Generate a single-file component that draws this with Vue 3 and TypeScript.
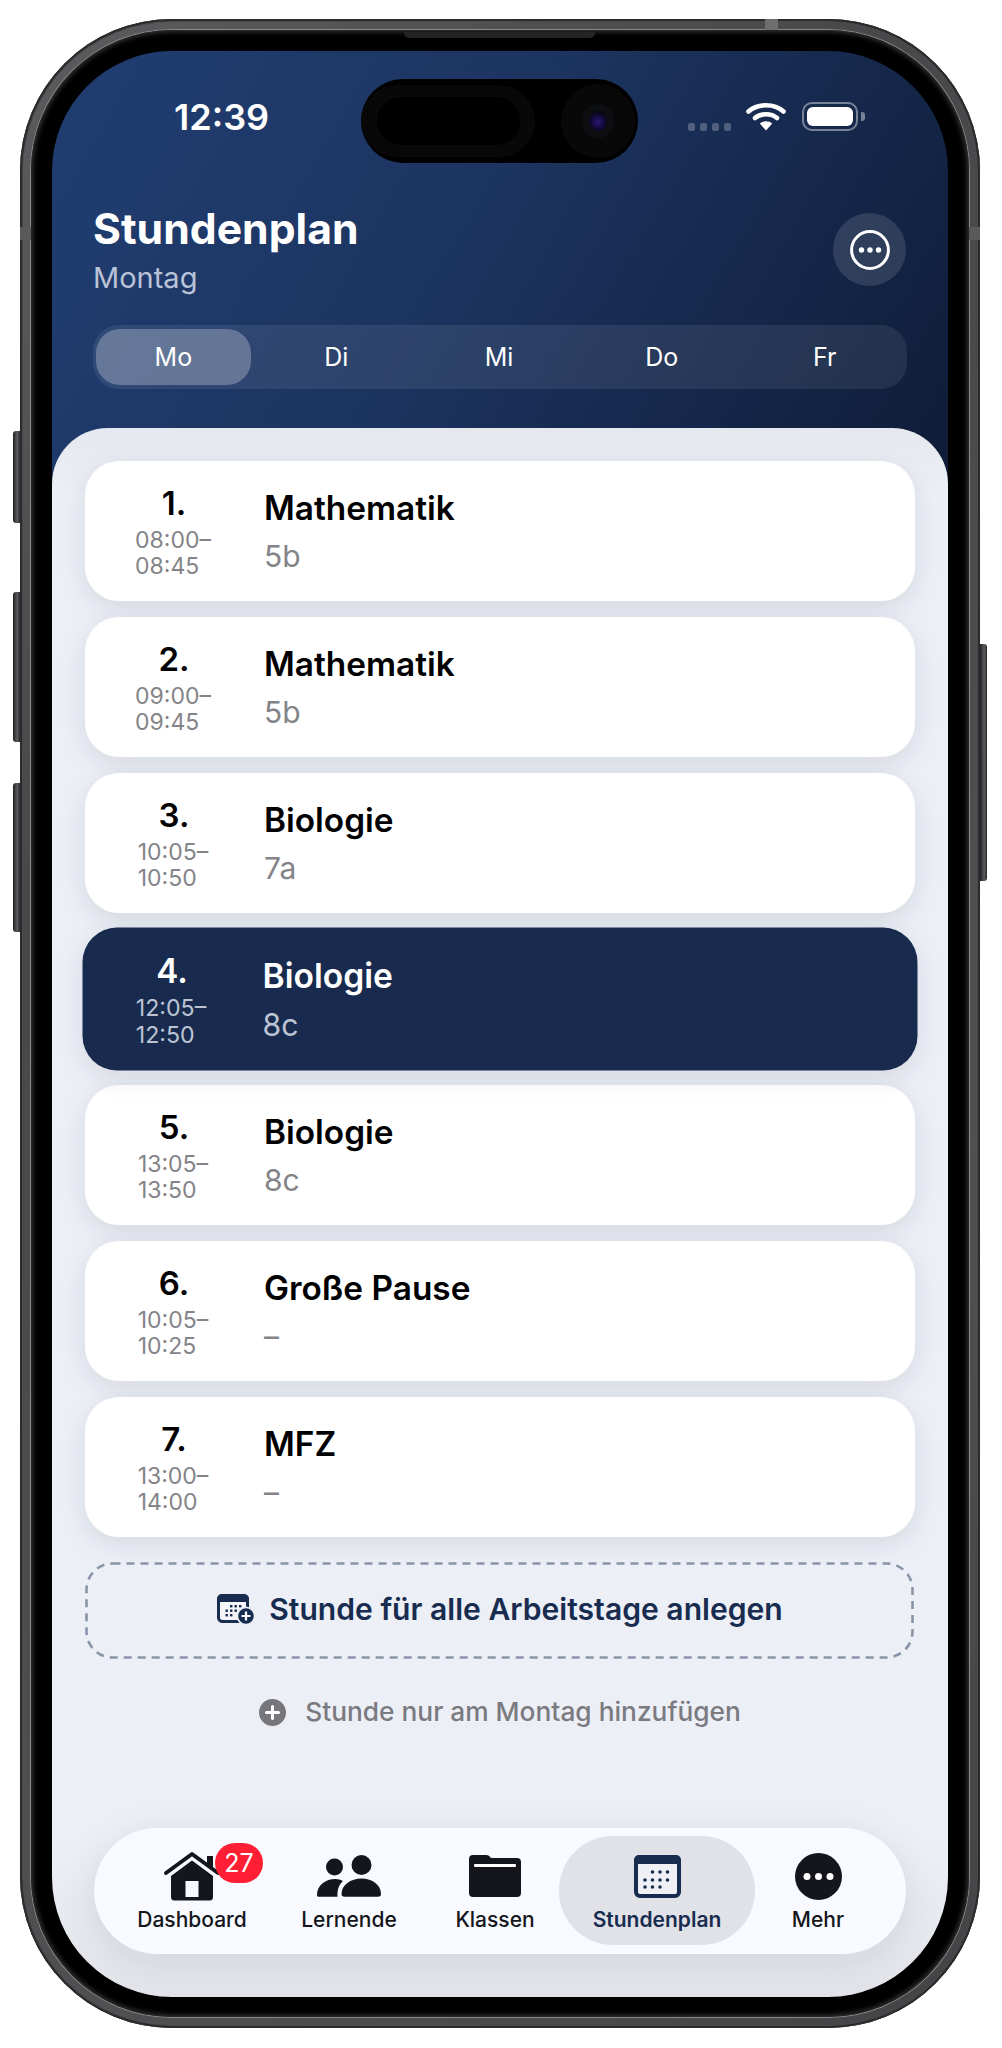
<template>
  <div class="page">
    <div class="device">
      <span class="side-btn left b1"></span>
      <span class="side-btn left b2"></span>
      <span class="side-btn left b3"></span>
      <span class="side-btn right b4"></span>
      <span class="speaker"></span>
      <span class="band band-top"></span>
      <span class="band band-left"></span>
      <span class="band band-right"></span>
      <div class="bezel">
        <div class="screen">
          <div class="island">
            <div class="island-ring"><div class="island-core"></div></div>
            <div class="camera"><div class="lens"></div></div>
          </div>

          <div class="status">
            <span class="time">12:39</span>
            <div class="status-right">
              <div class="signal"><i></i><i></i><i></i><i></i></div>
              <svg class="wifi" width="40" height="29" viewBox="0 0 40 29">
                <path d="M2.5 9.5C11.5 1.2 28.5 1.2 37.5 9.5" fill="none" stroke="#fff" stroke-width="4.6" stroke-linecap="round" />
                <path d="M9 16C14.8 11 25.2 11 31 16" fill="none" stroke="#fff" stroke-width="4.6" stroke-linecap="round" />
                <path d="M13.8 21.6C17 18.6 23 18.6 26.2 21.6L20 28.6Z" fill="#fff" />
              </svg>
              <div class="battery"><div class="battery-fill"></div></div>
              <span class="battery-nub"></span>
            </div>
          </div>

          <header class="header">
            <div class="title-row">
              <div>
                <h1>Stundenplan</h1>
                <p>Montag</p>
              </div>
              <button class="menu-btn" type="button">
                <svg width="40" height="40" viewBox="0 0 40 40">
                  <circle cx="20" cy="20" r="18.4" fill="none" stroke="#fff" stroke-width="3" />
                  <circle cx="11.5" cy="20" r="2.7" fill="#fff" />
                  <circle cx="20" cy="20" r="2.7" fill="#fff" />
                  <circle cx="28.5" cy="20" r="2.7" fill="#fff" />
                </svg>
              </button>
            </div>
            <div class="days">
              <span v-for="d in days" :key="d" class="day" :class="{ active: d === activeDay }">{{ d }}</span>
            </div>
          </header>

          <main class="sheet">
            <div class="lessons">
              <article
                v-for="l in lessons"
                :key="l.nr"
                class="lesson"
                :class="{ current: l.current }"
              >
                <div class="slot">
                  <div class="nr">{{ l.nr }}.</div>
                  <div class="hours">
                    <div>{{ l.from }}–</div>
                    <div>{{ l.to }}</div>
                  </div>
                </div>
                <div class="info">
                  <div class="subject">{{ l.subject }}</div>
                  <div class="klass">{{ l.klass }}</div>
                </div>
              </article>
            </div>

            <button class="add-all" type="button">
              <svg class="dash" width="829" height="97" viewBox="0 0 829 97">
                <rect x="1.5" y="1.5" width="826" height="94" rx="26" fill="none" stroke="#8a94a8" stroke-width="2.6" stroke-dasharray="8 6" />
              </svg>
              <svg width="38" height="31" viewBox="0 0 38 31">
                <rect x="1.5" y="1.5" width="29" height="26" rx="4" fill="#f4f5f9" stroke="#182c50" stroke-width="3" />
                <path d="M5 0h22a5 5 0 0 1 5 5v3H0V5a5 5 0 0 1 5-5Z" fill="#182c50" />
                <g fill="#182c50">
                  <rect x="13" y="11" width="2.4" height="2.4" /><rect x="17.5" y="11" width="2.4" height="2.4" /><rect x="22" y="11" width="2.4" height="2.4" />
                  <rect x="8.5" y="15.5" width="2.4" height="2.4" /><rect x="13" y="15.5" width="2.4" height="2.4" /><rect x="17.5" y="15.5" width="2.4" height="2.4" /><rect x="22" y="15.5" width="2.4" height="2.4" />
                  <rect x="8.5" y="20" width="2.4" height="2.4" /><rect x="13" y="20" width="2.4" height="2.4" />
                </g>
                <circle cx="29" cy="22" r="8.6" fill="#182c50" stroke="#eceff6" stroke-width="1.6" />
                <path d="M29 17.5v9M24.5 22h9" stroke="#fff" stroke-width="2.2" />
              </svg>
              <span>Stunde für alle Arbeitstage anlegen</span>
            </button>

            <button class="add-one" type="button">
              <svg width="27" height="27" viewBox="0 0 27 27">
                <circle cx="13.5" cy="13.5" r="13.5" fill="#77777b" />
                <path d="M13.5 7.5v12M7.5 13.5h12" stroke="#fff" stroke-width="3" stroke-linecap="round" />
              </svg>
              <span>Stunde nur am Montag hinzufügen</span>
            </button>

            <nav class="tabs">
              <div class="tab">
                <div class="tab-icon">
                  <svg width="58" height="50" viewBox="0 0 58 50">
                    <path d="M44 5h6v13l-6-5Z" fill="#14161b" />
                    <path d="M3 22 29 3l26 19" fill="none" stroke="#14161b" stroke-width="4" stroke-linecap="round" stroke-linejoin="round" />
                    <path fill-rule="evenodd" d="M29 9.5 50 25v21a3.5 3.5 0 0 1-3.5 3.5h-35A3.5 3.5 0 0 1 8 46V25ZM22.5 30v16h13V30Z" fill="#14161b" />
                  </svg>
                  <span class="badge">27</span>
                </div>
                <span class="tab-label">Dashboard</span>
              </div>
              <div class="tab">
                <div class="tab-icon">
                  <svg width="64" height="42" viewBox="0 0 64 42">
                    <circle cx="17.5" cy="12" r="8.5" fill="#14161b" />
                    <circle cx="44.5" cy="10" r="10" fill="#14161b" />
                    <path d="M0 40C0 30 9 24 18 24c3.5 0 6 .8 8 2-3.5 3-6 8-5.5 15.8H2c-1.5 0-2-.8-2-1.8Z" fill="#14161b" />
                    <path d="M24.5 39c0-9 9-15.5 20-15.5S64 30 64 39c0 1.8-1 2.8-3 2.8H27.5c-2 0-3-1-3-2.8Z" fill="#14161b" />
                  </svg>
                </div>
                <span class="tab-label">Lernende</span>
              </div>
              <div class="tab">
                <div class="tab-icon">
                  <svg width="52" height="42" viewBox="0 0 52 42">
                    <path d="M4 0h13c2.5 0 3.5 1 5 3h26a4 4 0 0 1 4 4v31a4 4 0 0 1-4 4H4a4 4 0 0 1-4-4V4a4 4 0 0 1 4-4Z" fill="#14161b" />
                    <rect x="5" y="9" width="42" height="3" rx="1" fill="#fff" />
                  </svg>
                </div>
                <span class="tab-label">Klassen</span>
              </div>
              <div class="tab active">
                <div class="tab-icon">
                  <svg width="47" height="43" viewBox="0 0 47 43">
                    <rect x="2" y="2" width="43" height="39" rx="4" fill="#eef0f5" stroke="#182c50" stroke-width="4" />
                    <path d="M5 0h37a5 5 0 0 1 5 5v4H0V5a5 5 0 0 1 5-5Z" fill="#182c50" />
                    <g fill="#182c50">
                      <circle cx="18.5" cy="17" r="1.8" /><circle cx="26" cy="17" r="1.8" /><circle cx="33.5" cy="17" r="1.8" />
                      <circle cx="11" cy="25" r="1.8" /><circle cx="18.5" cy="25" r="1.8" /><circle cx="26" cy="25" r="1.8" /><circle cx="33.5" cy="25" r="1.8" />
                      <circle cx="11" cy="32" r="1.8" /><circle cx="18.5" cy="32" r="1.8" /><circle cx="26" cy="32" r="1.8" />
                    </g>
                  </svg>
                </div>
                <span class="tab-label">Stundenplan</span>
              </div>
              <div class="tab">
                <div class="tab-icon">
                  <svg width="47" height="47" viewBox="0 0 47 47">
                    <circle cx="23.5" cy="23.5" r="23.5" fill="#14161b" />
                    <circle cx="12" cy="23.5" r="3.5" fill="#fff" />
                    <circle cx="23.5" cy="23.5" r="3.5" fill="#fff" />
                    <circle cx="35" cy="23.5" r="3.5" fill="#fff" />
                  </svg>
                </div>
                <span class="tab-label">Mehr</span>
              </div>
            </nav>
          </main>
        </div>
      </div>
    </div>
  </div>
</template>

<script setup lang="ts">
interface Lesson {
  nr: number;
  from: string;
  to: string;
  subject: string;
  klass: string;
  current?: boolean;
}

const days = ["Mo", "Di", "Mi", "Do", "Fr"];
const activeDay = "Mo";

const lessons: Lesson[] = [
  { nr: 1, from: "08:00", to: "08:45", subject: "Mathematik", klass: "5b" },
  { nr: 2, from: "09:00", to: "09:45", subject: "Mathematik", klass: "5b" },
  { nr: 3, from: "10:05", to: "10:50", subject: "Biologie", klass: "7a" },
  { nr: 4, from: "12:05", to: "12:50", subject: "Biologie", klass: "8c", current: true },
  { nr: 5, from: "13:05", to: "13:50", subject: "Biologie", klass: "8c" },
  { nr: 6, from: "10:05", to: "10:25", subject: "Große Pause", klass: "–" },
  { nr: 7, from: "13:00", to: "14:00", subject: "MFZ", klass: "–" },
];
</script>

<style>
html,
body {
  background: #fff;
}
</style>

<style scoped>
.page {
  width: 1002px;
  height: 2048px;
  padding: 19px 0 0 20px;
  box-sizing: border-box;
  font-family: Inter, "Liberation Sans", sans-serif;
}

.device {
  position: relative;
  width: 960px;
  height: 2009px;
  box-sizing: border-box;
  padding: 11px;
  border-radius: 152px;
  background: linear-gradient(135deg, #5c5c5e, #48484a 30%, #505052 70%, #444446);
  box-shadow: inset 0 0 0 2px #2b2b2d, inset 0 0 0 3px #4a4a4c;
}

.side-btn {
  position: absolute;
  width: 7px;
  background: linear-gradient(90deg, #1f1f21, #5c5c5e 60%, #2a2a2c);
}
.side-btn.left {
  left: -7px;
  border-radius: 3px 0 0 3px;
}
.side-btn.right {
  right: -7px;
  border-radius: 0 3px 3px 0;
}
.b1 { top: 412px; height: 92px; }
.b2 { top: 573px; height: 150px; }
.b3 { top: 764px; height: 149px; }
.b4 { top: 625px; height: 237px; }

.speaker {
  position: absolute;
  z-index: 2;
  top: 13px;
  left: 384px;
  width: 191px;
  height: 6px;
  border-radius: 0 0 5px 5px;
  background: #242426;
}

.band {
  position: absolute;
  z-index: 2;
  background: #6e6e70;
}
.band-top { top: 0; left: 745px; width: 13px; height: 11px; }
.band-left { top: 208px; left: 0; width: 11px; height: 13px; background: #5a5a5c; }
.band-right { top: 208px; right: 0; width: 11px; height: 13px; background: #5a5a5c; }

.bezel {
  height: 100%;
  box-sizing: border-box;
  padding: 21px 21px 20px;
  border-radius: 141px;
  background: #000;
  box-shadow: 0 0 0 1px #8a8a8c, inset 0 0 5px 2px #333335;
}

.screen {
  position: relative;
  display: flex;
  flex-direction: column;
  height: 100%;
  overflow: hidden;
  border-radius: 120px;
  background: linear-gradient(120deg, #213e72 0%, #1c3460 45%, #0e1b35 100%) top / 100% 470px no-repeat;
}

.island {
  position: absolute;
  z-index: 3;
  top: 28px;
  left: 309px;
  display: flex;
  align-items: center;
  width: 277px;
  height: 84px;
  border-radius: 42px;
  background: #000;
}
.island-ring {
  display: flex;
  align-items: center;
  justify-content: center;
  width: 174px;
  height: 72px;
  border-radius: 36px;
  background: #080808;
}
.island-core {
  width: 143px;
  height: 48px;
  border-radius: 24px;
  background: #000;
}
.camera {
  display: flex;
  align-items: center;
  justify-content: center;
  width: 74px;
  height: 74px;
  margin-left: 26px;
  border-radius: 50%;
  background: #080808;
}
.lens {
  width: 18px;
  height: 20px;
  border-radius: 50%;
  background: radial-gradient(circle at 50% 55%, #2a1570 0%, #130a3a 45%, #05060c 80%);
  box-shadow: 0 0 0 7px #0c0e11;
}

.status {
  display: flex;
  align-items: center;
  justify-content: space-between;
  height: 132px;
  padding: 0 83px 0 122px;
  flex: none;
}
.time {
  font-size: 36px;
  font-weight: 600;
  color: #fff;
}
.status-right {
  display: flex;
  align-items: center;
  margin-top: -1px;
}
.signal {
  display: flex;
  gap: 5px;
  margin: 20px 15px 0 0;
}
.signal i {
  display: block;
  width: 7px;
  height: 8px;
  border-radius: 2px;
  background: rgba(255, 255, 255, 0.24);
}
.battery {
  width: 56px;
  height: 29px;
  margin-left: 16px;
  padding: 3px;
  box-sizing: border-box;
  border: 2px solid rgba(255, 255, 255, 0.42);
  border-radius: 10px;
}
.battery-fill {
  height: 100%;
  border-radius: 6px;
  background: #fff;
}
.battery-nub {
  width: 4px;
  height: 9px;
  margin-left: 3px;
  border-radius: 0 3px 3px 0;
  background: rgba(255, 255, 255, 0.42);
}

.header {
  flex: none;
  padding: 22px 41px 39px;
}
.title-row {
  display: flex;
  justify-content: space-between;
}
h1 {
  margin: 0;
  font-size: 42.7px;
  line-height: 48px;
  font-weight: 700;
  color: #fff;
}
.title-row p {
  margin: 8px 0 0;
  font-size: 29px;
  line-height: 34px;
  color: #b9c3d8;
}
.menu-btn {
  display: flex;
  align-items: center;
  justify-content: center;
  width: 73px;
  height: 73px;
  margin: 8px 1px 0 0;
  padding: 0;
  border: 0;
  border-radius: 50%;
  background: rgba(255, 255, 255, 0.12);
}

.days {
  display: grid;
  grid-template-columns: repeat(5, 1fr);
  column-gap: 8px;
  height: 64px;
  margin-top: 30px;
  padding: 4px 5px 4px 3px;
  box-sizing: border-box;
  border-radius: 26px;
  background: rgba(255, 255, 255, 0.08);
}
.day {
  display: flex;
  align-items: center;
  justify-content: center;
  border-radius: 24px;
  font-size: 25px;
  font-weight: 400;
  color: #fff;
}
.day.active {
  background: rgba(255, 255, 255, 0.26);
}

.sheet {
  flex: 1;
  display: flex;
  flex-direction: column;
  padding: 33px 33px 43px;
  border-radius: 56px 56px 0 0;
  background: linear-gradient(180deg, #e6e8ef 0, #eceff6 70px, #eceff6 90%, #e1e3e8 100%);
}

.lessons {
  display: flex;
  flex-direction: column;
  gap: 16px;
}
.lesson {
  display: grid;
  grid-template-columns: 178px 1fr;
  column-gap: 1px;
  align-items: center;
  height: 140px;
  border-radius: 34px;
  background: #fff;
  box-shadow: 0 7px 26px rgba(20, 25, 45, 0.1);
  color: #000;
}
.lesson.current {
  transform: scale(1.006, 1.021);
  background: #182b4f;
  color: #fff;
}
.slot {
  display: flex;
  flex-direction: column;
  align-items: center;
}
.nr {
  font-size: 33px;
  line-height: 40px;
  font-weight: 600;
}
.hours {
  margin: 4px 0 0 -2px;
  font-size: 23px;
  line-height: 26.5px;
  color: #848488;
}
.current .hours {
  color: #bcc4d3;
}
.subject {
  font-size: 33.4px;
  line-height: 40px;
  font-weight: 600;
}
.klass {
  margin-top: 10px;
  font-size: 30px;
  line-height: 36px;
  color: #848488;
}
.current .klass {
  color: #bcc4d3;
}

.add-all {
  position: relative;
  display: flex;
  align-items: center;
  justify-content: center;
  gap: 14px;
  height: 97px;
  margin-top: 25px;
  padding: 0 0 3px;
  border: 0;
  background: transparent;
  font-family: inherit;
  font-size: 30.1px;
  font-weight: 600;
  color: #182c50;
}
.dash {
  position: absolute;
  top: 0;
  left: 0;
}
.add-one {
  display: flex;
  align-items: center;
  justify-content: center;
  gap: 19px;
  margin-top: 36px;
  padding: 0;
  border: 0;
  background: transparent;
  font-family: inherit;
  font-size: 26.3px;
  line-height: 34px;
  font-weight: 500;
  color: #7a7a80;
}

.tabs {
  display: grid;
  grid-template-columns: 150px 164px 128px 196px 126px;
  height: 126px;
  margin: auto 9px 0;
  padding: 8px 24px 9px 23px;
  box-sizing: border-box;
  border-radius: 63px;
  background: #f8faff;
  box-shadow: 0 6px 36px rgba(20, 25, 45, 0.09);
}
.tab {
  display: flex;
  flex-direction: column;
  align-items: center;
  border-radius: 54px;
}
.tab.active {
  background: #e0e2e7;
}
.tab-icon {
  position: relative;
  display: flex;
  align-items: center;
  justify-content: center;
  height: 50px;
  margin-top: 15px;
}
.badge {
  position: absolute;
  top: -8px;
  left: 52px;
  display: flex;
  align-items: center;
  justify-content: center;
  width: 48px;
  height: 40px;
  border-radius: 20px;
  background: #ff1f35;
  font-size: 25px;
  color: #fff;
}
.tab-label {
  margin-top: 6px;
  font-size: 21px;
  line-height: 26px;
  font-weight: 500;
  color: #14161b;
}
.tab.active .tab-label {
  font-weight: 600;
  color: #182c50;
}
</style>
